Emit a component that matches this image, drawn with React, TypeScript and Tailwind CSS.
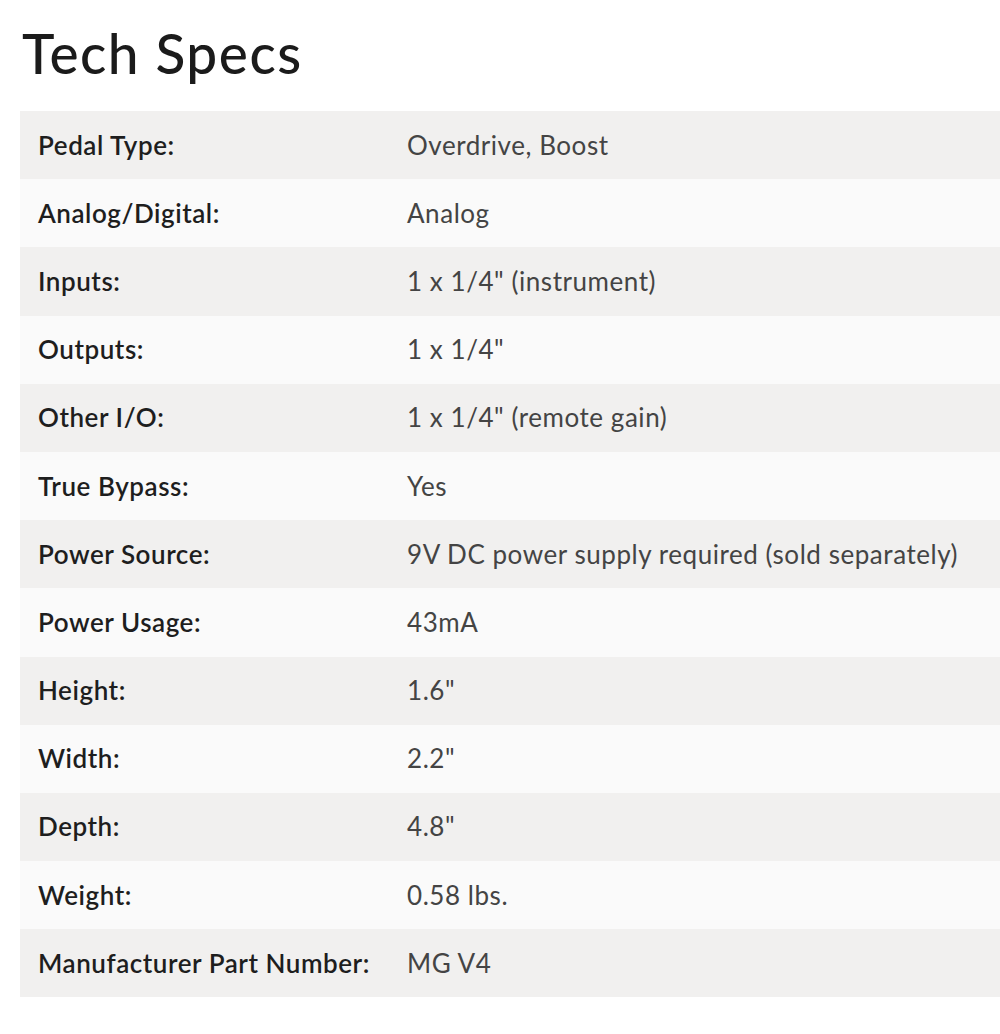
const specs = [
  ["Pedal Type:", "Overdrive, Boost"],
  ["Analog/Digital:", "Analog"],
  ["Inputs:", "1 x 1/4\" (instrument)"],
  ["Outputs:", "1 x 1/4\""],
  ["Other I/O:", "1 x 1/4\" (remote gain)"],
  ["True Bypass:", "Yes"],
  ["Power Source:", "9V DC power supply required (sold separately)"],
  ["Power Usage:", "43mA"],
  ["Height:", "1.6\""],
  ["Width:", "2.2\""],
  ["Depth:", "4.8\""],
  ["Weight:", "0.58 lbs."],
  ["Manufacturer Part Number:", "MG V4"],
]

export default function App() {
  return (
    <div className="min-h-[1034px] w-[1000px] overflow-hidden bg-white pl-5 pt-[20px] font-['Lato',sans-serif]">
      <h1 className="ml-[2px] text-[55px] leading-[66px] font-medium tracking-[1.5px] text-[#1b1b1b]">Tech Specs</h1>
      <div className="mt-[25px] w-[1000px]">
        {specs.map(([label, value], i) => (
          <div
            key={label}
            className={`flex h-[68.2px] items-center text-[26px] ${i % 2 === 0 ? "bg-[#f1f0ef]" : "bg-[#fafafa]"}`}
          >
            <div className="w-[387px] pl-[18px] font-semibold tracking-[0.55px] text-[#1e1e1e]">{label}</div>
            <div className="tracking-[0.55px] text-[#444]">{value}</div>
          </div>
        ))}
      </div>
    </div>
  )
}
